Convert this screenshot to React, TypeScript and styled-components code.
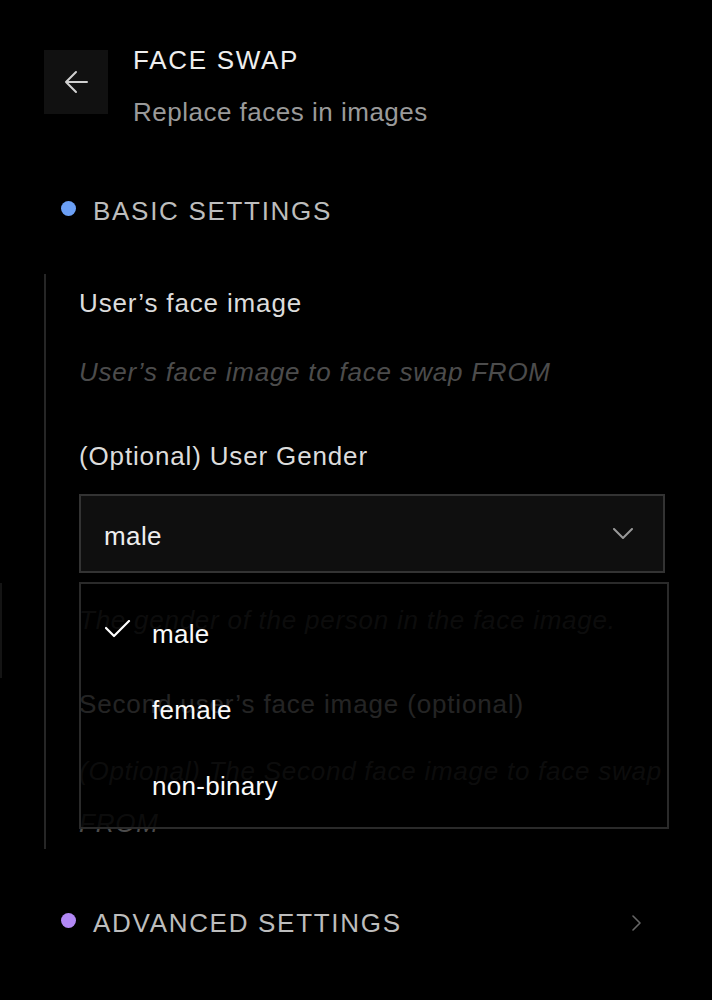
import React from "react";
import styled, { createGlobalStyle } from "styled-components";

const Global = createGlobalStyle`
  html, body { margin: 0; padding: 0; background: #000; }
  body { font-family: "Liberation Sans", Arial, sans-serif; color: #ddd; }
  * { box-sizing: border-box; }
`;

const Page = styled.div`
  position: relative;
  width: 712px;
  min-height: 1000px;
  padding: 42px 44px 0 44px;
  background: #000;
`;

const EdgeMark = styled.div`
  position: absolute;
  left: 0;
  top: 583px;
  width: 2px;
  height: 95px;
  background: #141414;
`;

const Header = styled.header`
  display: flex;
  align-items: flex-start;
  gap: 25px;
`;

const BackButton = styled.button`
  width: 64px;
  height: 64px;
  margin-top: 8px;
  border: none;
  padding: 0;
  background: #111;
  display: flex;
  align-items: center;
  justify-content: center;
  color: #ccc;
`;

const HeaderText = styled.div`
  display: flex;
  flex-direction: column;
`;

const Title = styled.h1`
  margin: 0;
  font-size: 26px;
  line-height: 36px;
  font-weight: 400;
  letter-spacing: 1.7px;
  color: #eee;
`;

const Subtitle = styled.p`
  margin: 16px 0 0;
  font-size: 26px;
  line-height: 36px;
  letter-spacing: 0.5px;
  color: #9a9a9a;
`;

const SectionHeader = styled.div<{ $mt: number }>`
  display: flex;
  align-items: center;
  gap: 17px;
  margin-top: ${(p) => p.$mt}px;
  padding: 0 26px 0 17px;
`;

const Dot = styled.span<{ $color: string }>`
  width: 15px;
  height: 15px;
  border-radius: 50%;
  background: ${(p) => p.$color};
  margin-bottom: 5px;
  flex: none;
`;

const SectionTitle = styled.span`
  flex: 1;
  font-size: 26px;
  line-height: 36px;
  letter-spacing: 1.7px;
  color: #bdbdbd;
`;

const SectionBody = styled.div`
  margin-top: 45px;
  border-left: 2px solid #262626;
  padding: 11px 0 0 33px;
  display: flex;
  flex-direction: column;
`;

const Label = styled.div<{ $mt: number }>`
  margin-top: ${(p) => p.$mt}px;
  font-size: 26px;
  line-height: 36px;
  letter-spacing: 0.85px;
  color: #dcdcdc;
`;

const Description = styled.div<{ $mt: number }>`
  margin-top: ${(p) => p.$mt}px;
  font-size: 26px;
  line-height: 52px;
  font-style: italic;
  letter-spacing: 0.75px;
  color: #4c4c4c;
`;

const SelectWrap = styled.div`
  position: relative;
  margin-top: 20px;
`;

const SelectBox = styled.div`
  height: 79px;
  width: 586px;
  background: #0f0f0f;
  border: 2px solid #333;
  display: flex;
  align-items: center;
  justify-content: space-between;
  padding: 6px 30px 0 23px;
  font-size: 26px;
  letter-spacing: 0.4px;
  color: #eee;
`;

const Chevron = styled.svg`
  margin-top: -6px;
`;

const Menu = styled.ul`
  position: absolute;
  left: 0;
  top: calc(100% + 9px);
  width: 590px;
  margin: 0;
  padding: 12px 0 3px;
  list-style: none;
  background: rgba(0, 0, 0, 0.84);
  border: 2px solid #2a2a2a;
  z-index: 5;
`;

const MenuItem = styled.li`
  position: relative;
  height: 76px;
  display: flex;
  align-items: center;
  padding-left: 71px;
  font-size: 26px;
  letter-spacing: 0.3px;
  color: #fafafa;
`;

const CheckMark = styled.svg`
  position: absolute;
  left: 24px;
  top: 50%;
  margin-top: -14px;
`;

const Check = () => (
  <CheckMark width="26" height="18" viewBox="0 0 26 18" fill="none">
    <polyline points="1,8 9,16 24,1" stroke="#fff" strokeWidth="2.2" strokeLinecap="round" strokeLinejoin="round" />
  </CheckMark>
);

const options = ["male", "female", "non-binary"];

export default function App() {
  return (
    <Page>
      <Global />
      <EdgeMark />
      <Header>
        <BackButton aria-label="Back">
          <svg width="24" height="24" viewBox="0 0 24 24" fill="none">
            <path d="M12 2 L2 12 L12 22 M2 12 H23" stroke="#d0d0d0" strokeWidth="2" strokeLinecap="round" strokeLinejoin="round" />
          </svg>
        </BackButton>
        <HeaderText>
          <Title>FACE SWAP</Title>
          <Subtitle>Replace faces in images</Subtitle>
        </HeaderText>
      </Header>

      <SectionHeader $mt={63}>
        <Dot $color="#6b9ff5" />
        <SectionTitle>BASIC SETTINGS</SectionTitle>
      </SectionHeader>

      <SectionBody>
        <Label $mt={0}>User’s face image</Label>
        <Description $mt={25}>User’s face image to face swap FROM</Description>
        <Label $mt={40}>(Optional) User Gender</Label>
        <SelectWrap>
          <SelectBox>
            <span>male</span>
            <Chevron width="20" height="12" viewBox="0 0 20 12" fill="none">
              <polyline points="1,1 10,10 19,1" stroke="#999" strokeWidth="2" strokeLinecap="round" strokeLinejoin="round" />
            </Chevron>
          </SelectBox>
          <Menu>
            {options.map((o, i) => (
              <MenuItem key={o}>
                {i === 0 && <Check />}
                {o}
              </MenuItem>
            ))}
          </Menu>
        </SelectWrap>
        <Description $mt={21}>The gender of the person in the face image.</Description>
        <Label $mt={40}>Second user’s face image (optional)</Label>
        <Description $mt={23}>(Optional) The Second face image to face swap FROM</Description>
      </SectionBody>

      <SectionHeader $mt={56}>
        <Dot $color="#b288f5" />
        <SectionTitle>ADVANCED SETTINGS</SectionTitle>
        <svg width="10" height="16" viewBox="0 0 10 16" fill="none">
          <polyline points="1,1 8,8 1,15" stroke="#666" strokeWidth="1.6" strokeLinecap="round" strokeLinejoin="round" />
        </svg>
      </SectionHeader>
    </Page>
  );
}
